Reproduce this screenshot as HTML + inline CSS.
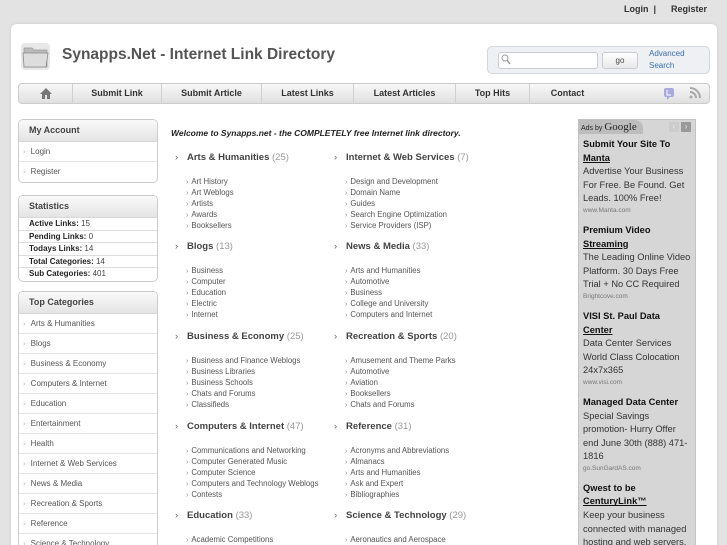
<!DOCTYPE html>
<html style="overflow:hidden;height:545px"><head><meta charset="utf-8"><style>
*{margin:0;padding:0;box-sizing:border-box}
body{width:727px;height:545px;overflow:hidden;background:#e3e3e3;font-family:"Liberation Sans",Arial,sans-serif;position:relative;color:#555}
.a{position:absolute}
#top{top:4px;right:20px;font-size:9px;font-weight:bold;color:#333}
#panel{left:11px;top:24px;width:706px;height:530px;background:#fff;border-radius:6px;box-shadow:0 0 3px #ccc}
#title{left:62px;top:46px;font-size:15.5px;font-weight:bold;color:#555;font-family:"Liberation Sans Narrow","Liberation Sans",sans-serif}
#sbox{left:487px;top:46px;width:223px;height:28px;background:#eef0f3;border:1px solid #d4d8dd;border-radius:5px}
#nav{left:18px;top:83px;width:692px;height:21px;border:1px solid #ccc;border-radius:4px;background:linear-gradient(#f7f7f7,#e0e0e0)}
.ni{position:absolute;top:0;height:19px;line-height:19px;font-size:9px;font-weight:bold;color:#333;text-align:center;border-right:1px solid #cfcfcf}
.box{position:absolute;left:18px;width:140px;border:1px solid #ccc;border-radius:5px;background:#fff;overflow:hidden}
.bh{height:22px;line-height:21px;padding-left:10px;font-size:9px;font-weight:bold;color:#444;background:linear-gradient(#fafafa,#e4e4e4);border-bottom:1px solid #d8d8d8}
.br{height:20px;line-height:19px;padding-left:4px;font-size:8px;color:#555;border-bottom:1px solid #e5e5e5}
.br:before{content:"›";color:#bbb;margin-right:5px}
.sr{height:12.5px;line-height:12px;padding-left:10px;font-size:8px;color:#444;border-bottom:1px solid #ddd}
.sr b{color:#222}
.ch{position:absolute;font-size:9.5px;font-weight:bold;color:#444}
.ch:before{content:"›";position:absolute;left:-12px;color:#666;font-weight:normal}
.ch span{font-weight:normal;color:#999}
.sl{position:absolute;font-size:7.8px;line-height:11px;color:#555}
.sl div{height:11px;line-height:11px;white-space:nowrap}
.sl div:before{content:"›";color:#888;margin-right:3px;font-size:7px;line-height:11px}
#ad{left:578px;top:119px;width:118px;height:430px;background:#d6d6d6;border:1px solid #c3c3c3;font-size:9.3px;line-height:13.6px;color:#333;padding:4px 0 0 4px;white-space:nowrap}
#ad b{color:#111;display:block}
#ad u{font-weight:bold;color:#111}
#ad small{font-size:6.5px;color:#777;display:block;line-height:10px;margin-bottom:8px}
</style></head><body>
<div class="a" id="top">Login &nbsp;| &nbsp;&nbsp;&nbsp;&nbsp;&nbsp;Register</div>
<div class="a" id="panel"></div>
<svg class="a" style="left:19px;top:40px" width="34" height="32" viewBox="0 0 34 32"><rect x="2" y="3" width="29" height="27" rx="4" fill="#e8e8e8"/><path d="M5 8 h8 l2 2 h13 v17 h-23z" fill="#bbb" stroke="#999" stroke-width=".7"/><path d="M4 13 h25 l-2 14 h-22z" fill="#ddd" stroke="#888" stroke-width=".8"/></svg>
<div class="a" id="title">Synapps.Net - Internet Link Directory</div>
<div class="a" id="sbox"></div>
<div class="a" style="left:498px;top:52px;width:100px;height:17px;background:#fff;border:1px solid #c9cdd2;border-radius:3px"></div>
<svg class="a" style="left:501px;top:54px" width="10" height="11"><circle cx="4" cy="4" r="3" fill="none" stroke="#999"/><path d="M6 6 L9 10" stroke="#999" stroke-width="1.5"/></svg>
<div class="a" style="left:602px;top:52px;width:36px;height:17px;background:linear-gradient(#fff,#e8e8e8);border:1px solid #c9cdd2;border-radius:3px;font-size:8px;text-align:center;line-height:15px;color:#444">go</div>
<div class="a" style="left:649px;top:48px;font-size:8px;line-height:12px;color:#3a6fb0">Advanced<br>Search</div>
<div class="a" id="nav">
<div class="ni" style="left:0;width:54px"><svg width="12" height="11" style="margin-top:4px" viewBox="0 0 12 11"><path d="M6 0 L12 6 H10 V11 H7 V7 H5 V11 H2 V6 H0Z" fill="#777"/></svg></div>
<div class="ni" style="left:54px;width:89px">Submit Link</div>
<div class="ni" style="left:143px;width:100px">Submit Article</div>
<div class="ni" style="left:243px;width:92px">Latest Links</div>
<div class="ni" style="left:335px;width:102px">Latest Articles</div>
<div class="ni" style="left:437px;width:74px">Top Hits</div>
<div class="ni" style="left:511px;width:75px;border:none">Contact</div>
<svg style="position:absolute;left:644px;top:3px" width="12" height="13"><rect x="1" y="1" width="10" height="9" rx="2" fill="#a9a9de"/><path d="M4 3 v5 h4" stroke="#fff" fill="none"/><path d="M4 10 v3 l3-3" fill="#a9a9de"/></svg>
<svg style="position:absolute;left:670px;top:3px" width="12" height="12"><circle cx="2" cy="10" r="1.5" fill="#aaa"/><path d="M1 5a6 6 0 0 1 6 6M1 1a10 10 0 0 1 10 10" stroke="#aaa" stroke-width="2" fill="none"/></svg>
</div>

<div class="box" style="top:119px;height:64px"><div class="bh">My Account</div><div class="br">Login</div><div class="br" style="border:none">Register</div></div>
<div class="box" style="top:195px;height:87px"><div class="bh">Statistics</div>
<div class="sr"><b>Active Links:</b> 15</div><div class="sr"><b>Pending Links:</b> 0</div><div class="sr"><b>Todays Links:</b> 14</div><div class="sr"><b>Total Categories:</b> 14</div><div class="sr" style="border:none"><b>Sub Categories:</b> 401</div></div>
<div class="box" style="top:291px;height:270px"><div class="bh">Top Categories</div>
<div class="br">Arts &amp; Humanities</div><div class="br">Blogs</div><div class="br">Business &amp; Economy</div><div class="br">Computers &amp; Internet</div><div class="br">Education</div><div class="br">Entertainment</div><div class="br">Health</div><div class="br">Internet &amp; Web Services</div><div class="br">News &amp; Media</div><div class="br">Recreation &amp; Sports</div><div class="br">Reference</div><div class="br">Science &amp; Technology</div></div>

<div class="a" style="left:171px;top:128px;font-size:8.5px;font-weight:bold;font-style:italic;color:#222">Welcome to Synapps.net - the COMPLETELY free Internet link directory.</div>

<div class="ch" style="left:187px;top:152px">Arts &amp; Humanities <span>(25)</span></div>
<div class="sl" style="left:186px;top:176px"><div>Art History</div><div>Art Weblogs</div><div>Artists</div><div>Awards</div><div>Booksellers</div></div>
<div class="ch" style="left:187px;top:241px">Blogs <span>(13)</span></div>
<div class="sl" style="left:186px;top:265px"><div>Business</div><div>Computer</div><div>Education</div><div>Electric</div><div>Internet</div></div>
<div class="ch" style="left:187px;top:331px">Business &amp; Economy <span>(25)</span></div>
<div class="sl" style="left:186px;top:355px"><div>Business and Finance Weblogs</div><div>Business Libraries</div><div>Business Schools</div><div>Chats and Forums</div><div>Classifieds</div></div>
<div class="ch" style="left:187px;top:421px">Computers &amp; Internet <span>(47)</span></div>
<div class="sl" style="left:186px;top:445px"><div>Communications and Networking</div><div>Computer Generated Music</div><div>Computer Science</div><div>Computers and Technology Weblogs</div><div>Contests</div></div>
<div class="ch" style="left:187px;top:510px">Education <span>(33)</span></div>
<div class="sl" style="left:186px;top:534px"><div>Academic Competitions</div></div>

<div class="ch" style="left:346px;top:152px">Internet &amp; Web Services <span>(7)</span></div>
<div class="sl" style="left:345px;top:176px"><div>Design and Development</div><div>Domain Name</div><div>Guides</div><div>Search Engine Optimization</div><div>Service Providers (ISP)</div></div>
<div class="ch" style="left:346px;top:241px">News &amp; Media <span>(33)</span></div>
<div class="sl" style="left:345px;top:265px"><div>Arts and Humanities</div><div>Automotive</div><div>Business</div><div>College and University</div><div>Computers and Internet</div></div>
<div class="ch" style="left:346px;top:331px">Recreation &amp; Sports <span>(20)</span></div>
<div class="sl" style="left:345px;top:355px"><div>Amusement and Theme Parks</div><div>Automotive</div><div>Aviation</div><div>Booksellers</div><div>Chats and Forums</div></div>
<div class="ch" style="left:346px;top:421px">Reference <span>(31)</span></div>
<div class="sl" style="left:345px;top:445px"><div>Acronyms and Abbreviations</div><div>Almanacs</div><div>Arts and Humanities</div><div>Ask and Expert</div><div>Bibliographies</div></div>
<div class="ch" style="left:346px;top:510px">Science &amp; Technology <span>(29)</span></div>
<div class="sl" style="left:345px;top:534px"><div>Aeronautics and Aerospace</div></div>

<div class="a" id="ad">
<div style="position:absolute;left:0;top:0;width:64px;height:14px;background:#bdbdbd;font-size:7px;line-height:14px;padding-left:2px;color:#222;border-radius:0 8px 0 0">Ads by <span style="font-family:'Liberation Serif',serif;font-size:11px">Google</span></div>
<div style="position:absolute;left:90px;top:2px;width:10px;height:10px;background:#ccc;color:#eee;font-size:8px;line-height:10px;text-align:center">‹</div>
<div style="position:absolute;left:102px;top:2px;width:10px;height:10px;background:#999;color:#eee;font-size:8px;line-height:10px;text-align:center">›</div>
<div style="height:14px"></div>
<b>Submit Your Site To<br><u>Manta</u></b>Advertise Your Business<br>For Free. Be Found. Get<br>Leads. 100% Free!<small>www.Manta.com</small>
<b>Premium Video<br><u>Streaming</u></b>The Leading Online Video<br>Platform. 30 Days Free<br>Trial + No CC Required<small>Brightcove.com</small>
<b>VISI St. Paul Data<br><u>Center</u></b>Data Center Services<br>World Class Colocation<br>24x7x365<small>www.visi.com</small>
<b>Managed Data Center</b>Special Savings<br>promotion- Hurry Offer<br>end June 30th (888) 471-<br>1816<small>go.SunGardAS.com</small>
<b>Qwest to be<br><u>CenturyLink™</u></b>Keep your business<br>connected with managed<br>hosting and web servers.
</div>
</body></html>
